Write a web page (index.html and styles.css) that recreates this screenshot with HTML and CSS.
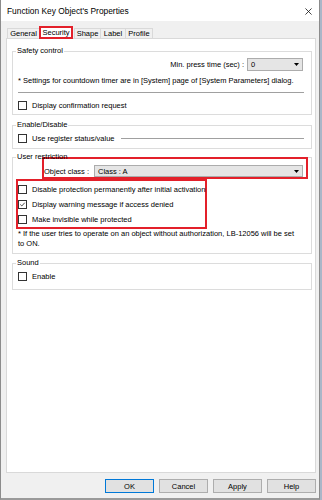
FILE: index.html
```html
<!DOCTYPE html>
<html lang="en">
<head>
  <meta charset="UTF-8">
  <title>Function Key Object's Properties</title>
  <link rel="stylesheet" href="styles.css">
</head>
<body>
  <div class="window">
    <div class="titlebar">
      <span class="title">Function Key Object's Properties</span>
      <svg class="close" viewBox="0 0 8 8"><path d="M0.5 0.5L7.5 7.5M7.5 0.5L0.5 7.5" stroke="#111" stroke-width="0.9"/></svg>
    </div>

    <div class="dialog">
      <div class="tabs">
        <span class="tab tab-general">General</span>
        <span class="tab tab-active">Security</span>
        <span class="tab tab-shape">Shape</span>
        <span class="tab tab-label">Label</span>
        <span class="tab tab-profile">Profile</span>
      </div>

      <div class="panel">
        <fieldset class="group group-safety">
          <legend>Safety control</legend>
          <div class="press-row">
            <span>Min. press time (sec) :</span>
            <div class="combo combo-press">
              <span>0</span>
              <svg class="arrow" viewBox="0 0 5 3"><path d="M0 0H5L2.5 3Z" fill="#000"/></svg>
            </div>
          </div>
          <div class="note">* Settings for countdown timer are in [System] page of [System Parameters] dialog.</div>
          <div class="separator"></div>
          <div class="check check-first"><span class="box"></span>Display confirmation request</div>
        </fieldset>

        <fieldset class="group group-enable">
          <legend>Enable/Disable</legend>
          <div class="check check-line"><span class="box"></span>Use register status/value<span class="rule"></span></div>
        </fieldset>

        <fieldset class="group group-user">
          <legend>User restriction</legend>
          <div class="mark mark-class">
            <span>Object class :</span>
            <div class="combo combo-class">
              <span>Class : A</span>
              <svg class="arrow" viewBox="0 0 5 3"><path d="M0 0H5L2.5 3Z" fill="#000"/></svg>
            </div>
          </div>
          <div class="mark mark-options">
            <div class="check option"><span class="box"></span>Disable protection permanently after initial activation</div>
            <div class="check option">
              <span class="box"><svg viewBox="0 0 9 9"><path d="M1.6 4.4L3.6 6.4L7.4 2.2" stroke="#000" stroke-width="0.9" fill="none"/></svg></span>
              Display warning message if access denied
            </div>
            <div class="check option"><span class="box"></span>Make invisible while protected</div>
          </div>
          <div class="note">* If the user tries to operate on an object without authorization, LB-12056 will be set<br>to ON.</div>
        </fieldset>

        <fieldset class="group group-sound">
          <legend>Sound</legend>
          <div class="check check-first"><span class="box"></span>Enable</div>
        </fieldset>
      </div>

      <div class="buttons">
        <button class="btn btn-default">OK</button>
        <button class="btn">Cancel</button>
        <button class="btn">Apply</button>
        <button class="btn">Help</button>
      </div>
    </div>
  </div>
</body>
</html>
```

FILE: styles.css
```css
:root {
  --face: #f0f0f0;
  --text: #000;
  --group-border: #dcdcdc;
  --panel-border: #d9d9d9;
  --etched: #a0a0a0;
  --annotation: #e3202a;
}

body {
  margin: 0;
  width: 322px;
  height: 500px;
  background: #aab6c8;
  font-family: 'Liberation Sans', Arial, sans-serif;
  font-size: 7.5px;
  color: var(--text);
  overflow: hidden;
}

.window {
  box-sizing: border-box;
  width: 320px;
  height: 500px;
  background: var(--face);
  border-left: 1px solid #8c8c8c;
  border-right: 1px solid #8c8c8c;
  border-bottom: 2px solid #9a9a9a;
  display: flex;
  flex-direction: column;
}

.titlebar {
  height: 21px;
  background: #fff;
  display: flex;
  align-items: center;
  justify-content: space-between;
  padding: 0 7px 0 6px;
}

.title {
  font-size: 8.4px;
}

.close {
  width: 7px;
  height: 7px;
  margin-top: 1px;
}

.dialog {
  padding: 5px 3px 0 5px;
}

/* tab strip */
.tabs {
  height: 12px;
  display: flex;
  align-items: flex-end;
  padding-left: 1px;
}

.tab {
  box-sizing: border-box;
  height: 10px;
  line-height: 9px;
  text-align: center;
  border: 1px solid var(--panel-border);
  border-bottom: none;
  margin-left: -1px;
  background: var(--face);
}

.tab-general {
  width: 33px;
  margin-left: 0;
}

.tab-shape {
  width: 27px;
  margin-left: 1px;
}

.tab-label {
  width: 26px;
}

.tab-profile {
  width: 28px;
}

.tab-active {
  position: relative;
  z-index: 1;
  width: 34px;
  height: 13px;
  line-height: 10px;
  margin: 0 0 -1px -1px;
  background: #fff;
  border: 2px solid var(--annotation);
}

.panel {
  box-sizing: border-box;
  height: 435px;
  background: #fff;
  border: 1px solid var(--panel-border);
  padding: 7px 3px 0 5px;
}

/* group boxes */
.group {
  margin: 0;
  padding: 0 7px 4px 5px;
  border: 1px solid var(--group-border);
  min-inline-size: 0;
}

.group legend {
  padding: 0 1px;
  margin-left: -2px;
  line-height: 10px;
}

.group-enable {
  margin-top: 5px;
  padding-bottom: 5px;
}

.group-user {
  margin-top: 3px;
}

.group-sound {
  margin-top: 4px;
  padding-bottom: 8px;
}

.press-row {
  height: 14px;
  margin-top: 1px;
  display: flex;
  align-items: center;
  justify-content: flex-end;
  gap: 3px;
}

.combo {
  box-sizing: border-box;
  display: flex;
  align-items: center;
  justify-content: space-between;
  background: #e5e5e5;
  border: 1px solid #acacac;
  padding: 0 3px 0 3px;
}

.combo-press {
  width: 56px;
  height: 13px;
  margin-right: 1px;
}

.combo-class {
  flex: 1;
  height: 12px;
  margin-left: 5px;
}

.arrow {
  width: 5px;
  height: 3px;
}

.note {
  line-height: 10px;
  margin-top: 5px;
}

.group-user .note {
  margin-top: 0;
}

.separator {
  margin-top: 6px;
  border-top: 1px solid var(--etched);
}

.check {
  height: 10px;
  display: flex;
  align-items: center;
  gap: 5px;
  white-space: nowrap;
}

.check-first {
  margin-top: 7px;
}

.group-enable .check,
.group-sound .check {
  margin-top: 3px;
}

.box {
  box-sizing: border-box;
  width: 9px;
  height: 9px;
  flex: none;
  background: #fff;
  border: 1px solid #333;
  display: flex;
}

.box svg {
  width: 7px;
  height: 7px;
}

.rule {
  flex: 1;
  margin-left: 1px;
  border-top: 1px solid var(--etched);
}

/* red annotation frames */
.mark {
  border: 2px solid var(--annotation);
}

.mark-class {
  margin: -5px -4px 0 24px;
  padding: 6px 3px 0 0;
  height: 12px;
  display: flex;
  align-items: center;
}

.mark-options {
  width: 191px;
  box-sizing: border-box;
  margin-left: -2px;
  padding-top: 1px;
}

.option {
  height: 15px;
}

/* bottom buttons */
.buttons {
  margin-top: 6px;
  display: flex;
  justify-content: flex-end;
  gap: 5px;
}

.btn {
  box-sizing: border-box;
  width: 49px;
  height: 14px;
  padding: 0;
  font-family: inherit;
  font-size: 7.5px;
  color: var(--text);
  background: #e1e1e1;
  border: 1px solid #adadad;
}

.btn-default {
  border-color: #0078d7;
}
```
